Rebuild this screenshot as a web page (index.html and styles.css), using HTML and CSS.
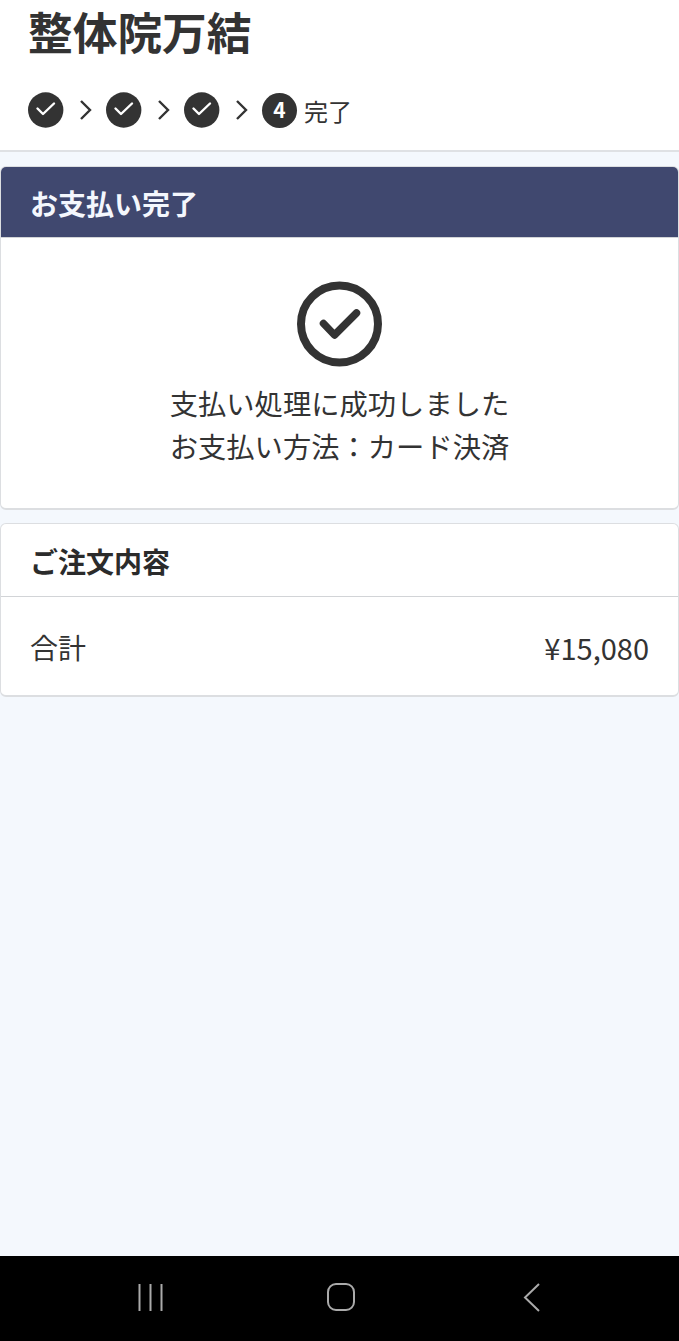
FILE: index.html
```html
<!DOCTYPE html>
<html lang="ja">
<head>
  <meta charset="UTF-8">
  <title>お支払い完了</title>
  <meta name="viewport" content="width=device-width, initial-scale=1">
  <link rel="stylesheet" href="styles.css">
</head>
<body>
  <header class="header">
    <h1>整体院万結</h1>
    <div class="steps">
      <svg class="step" viewBox="0 0 36 36"><circle cx="17.7" cy="18" r="17.7"/><path d="M9.500 16.500l5.500 5.500L26 11.500"/></svg>
      <svg class="arrow" viewBox="0 0 14 22"><path d="M2 2l9 9-9 9"/></svg>
      <svg class="step" viewBox="0 0 36 36"><circle cx="17.7" cy="18" r="17.7"/><path d="M9.500 16.500l5.500 5.500L26 11.500"/></svg>
      <svg class="arrow" viewBox="0 0 14 22"><path d="M2 2l9 9-9 9"/></svg>
      <svg class="step" viewBox="0 0 36 36"><circle cx="17.7" cy="18" r="17.7"/><path d="M9.500 16.500l5.500 5.500L26 11.500"/></svg>
      <svg class="arrow" viewBox="0 0 14 22"><path d="M2 2l9 9-9 9"/></svg>
      <span class="step-num">4</span>
      <span class="step-label">完了</span>
    </div>
  </header>
  <main>
    <section class="card result">
      <h2 class="card-title primary">お支払い完了</h2>
      <div class="result-body">
        <svg class="done" viewBox="0 0 86 86"><circle cx="42.500" cy="43" r="38.500"/><path d="M26.500 42.500l11 11.500 22-22"/></svg>
        <p>支払い処理に成功しました</p>
        <p>お支払い方法：カード決済</p>
      </div>
    </section>
    <section class="card">
      <h2 class="card-title">ご注文内容</h2>
      <div class="total"><span>合計</span><span class="price">¥15,080</span></div>
    </section>
  </main>
  <nav class="navbar">
    <svg viewBox="0 0 32 32"><path d="M3.500 3v27M14.500 3v27M25.500 3v27"/></svg>
    <svg viewBox="0 0 32 32"><rect x="2" y="3" width="26" height="26" rx="8"/></svg>
    <svg viewBox="0 0 32 32"><path d="M23 3L9 16.500l14 13.500"/></svg>
  </nav>
</body>
</html>
```
FILE: styles.css
```css
* { box-sizing: border-box; }
body { margin: 0; height: 1341px; display: flex; flex-direction: column; overflow: hidden; background: #f4f8fd; color: #333; font-family: "Noto Sans CJK JP", sans-serif; }
h1, h2, p { margin: 0; }
svg { display: block; fill: none; flex: none; }
.header { height: 152px; padding: 0 28px; background: #fff; border-bottom: 2px solid #dfe1e4; }
h1 { height: 92px; font-size: 44.7px; line-height: 62px; }
.steps { display: flex; align-items: center; height: 36px; }
.step { width: 36px; height: 36px; }
.step circle { fill: #333; }
.step path { stroke: #fff; stroke-width: 2.4; stroke-linecap: round; stroke-linejoin: round; }
.arrow { width: 14px; height: 22px; margin: 0 13px 0 15px; }
.arrow path { stroke: #333; stroke-width: 2.4; }
.step-num { width: 35px; height: 35px; border-radius: 50%; background: #333; color: #fff; font-size: 21px; font-weight: bold; line-height: 32px; text-align: center; }
.step-label { margin-left: 7px; font-size: 24px; line-height: 36px; padding-top: 2px; }
main { flex: 1; padding-top: 14px; }
.card { margin-bottom: 13px; background: #fff; border: 1px solid #dcdee1; border-bottom-width: 2px; border-radius: 6px; overflow: hidden; }
.card-title { height: 73px; padding: 0 29px; border-bottom: 1px solid #d2d4d7; color: #2b2b2b; font-size: 28px; line-height: 75px; }
.card-title.primary { height: 71px; background: #40486f; color: #f4f7fd; line-height: 73px; }
.result { height: 344px; }
.result-body { padding-top: 43px; font-size: 28.3px; line-height: 43px; text-align: center; }
.done { width: 86px; height: 86px; margin: 0 auto 14px; }
.done circle, .done path { stroke: #333; stroke-width: 8; stroke-linecap: round; stroke-linejoin: round; }
.done path { stroke-width: 7.5; }
.total { display: flex; justify-content: space-between; align-items: center; height: 98px; padding: 1px 29px 0; font-size: 28px; }
.price { font-size: 29px; }
.navbar { display: flex; justify-content: space-between; align-items: center; height: 85px; padding: 0 131px 4px 136px; background: #000; }
.navbar svg { width: 32px; height: 32px; stroke: #aaa; stroke-width: 2; }
```
